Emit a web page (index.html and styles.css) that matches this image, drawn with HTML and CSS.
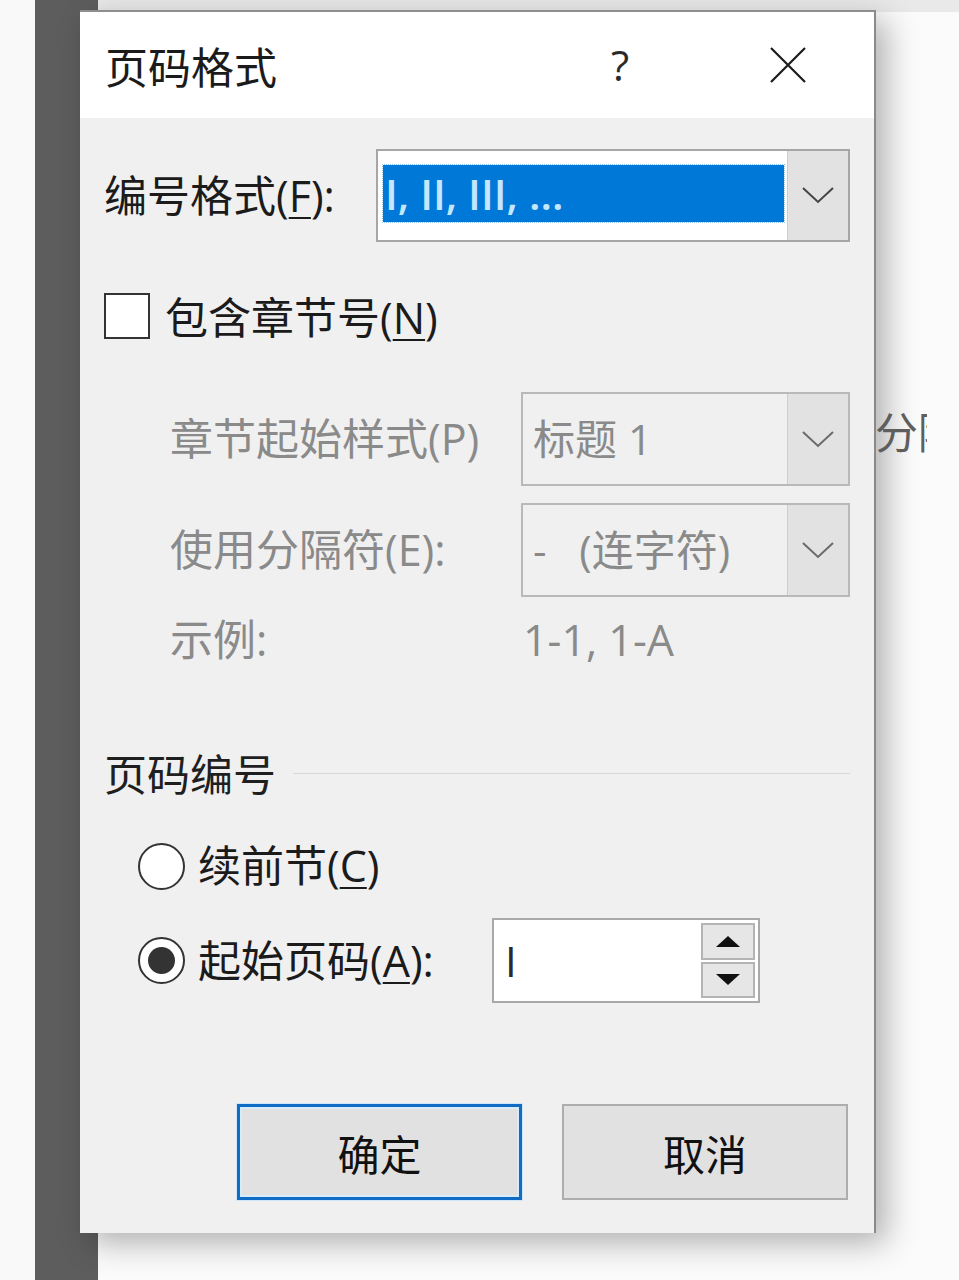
FILE: index.html
```html
<!DOCTYPE html>
<html lang="zh-CN">
<head>
<meta charset="utf-8">
<title>页码格式</title>
<link rel="stylesheet" href="styles.css">
</head>
<body>
<div class="desk">
  <div class="strip-light"></div>
  <div class="strip-dark"></div>
  <div class="doc"></div>
</div>

<section class="dialog">
  <header class="titlebar">
    <span class="title">页码格式</span>
    <span class="help">?</span>
    <span class="close">
      <svg width="38" height="38" viewBox="0 0 38 38"><path d="M2 2 L36 36 M36 2 L2 36" stroke="#1b1b1b" stroke-width="2.2" fill="none"/></svg>
    </span>
  </header>

  <div class="content">
    <div class="row row-format">
      <span class="lbl lbl-format">编号格式(<u>F</u>):</span>
      <div class="combo combo-active">
        <div class="combo-field field-white"><span class="sel">I, II, III, ...</span></div>
        <div class="combo-btn">
          <svg width="32" height="17" viewBox="0 0 32 17"><path d="M1 1 L16 15 L31 1" stroke="#444" stroke-width="2" fill="none"/></svg>
        </div>
      </div>
    </div>

    <div class="row row-check">
      <span class="checkbox"></span>
      <span class="lbl check-lbl">包含章节号(<u>N</u>)</span>
    </div>

    <div class="row row-p">
      <span class="lbl dis lbl-sub">章节起始样式(P)</span>
      <div class="combo combo-dis">
        <div class="combo-field field-dis"><span class="val">标题 1</span></div>
        <div class="combo-btn">
          <svg width="32" height="17" viewBox="0 0 32 17"><path d="M1 1 L16 15 L31 1" stroke="#6a6a6a" stroke-width="2" fill="none"/></svg>
        </div>
      </div>
      <span class="clip-text">分隔</span>
    </div>

    <div class="row row-e">
      <span class="lbl dis lbl-sub">使用分隔符(E):</span>
      <div class="combo combo-dis">
        <div class="combo-field field-dis"><span class="val">-&nbsp;&nbsp;&nbsp;(连字符)</span></div>
        <div class="combo-btn">
          <svg width="32" height="17" viewBox="0 0 32 17"><path d="M1 1 L16 15 L31 1" stroke="#6a6a6a" stroke-width="2" fill="none"/></svg>
        </div>
      </div>
    </div>

    <div class="row row-example">
      <span class="lbl dis lbl-sub">示例:</span>
      <span class="lbl dis example-val">1-1, 1-A</span>
    </div>

    <div class="row row-group">
      <span class="lbl group-title">页码编号</span>
      <span class="group-line"></span>
    </div>

    <div class="row row-radio1">
      <span class="radio"></span>
      <span class="lbl radio-lbl">续前节(<u>C</u>)</span>
    </div>

    <div class="row row-radio2">
      <span class="radio radio-on"><span class="dot"></span></span>
      <span class="lbl radio-lbl radio-lbl2">起始页码(<u>A</u>):</span>
      <div class="spin">
        <span class="spin-val">I</span>
        <div class="spin-btns">
          <span class="spin-btn"><svg width="24" height="11" viewBox="0 0 24 11"><path d="M12 0 L24 11 L0 11 Z" fill="#111"/></svg></span>
          <span class="spin-btn"><svg width="24" height="11" viewBox="0 0 24 11"><path d="M0 0 L24 0 L12 11 Z" fill="#111"/></svg></span>
        </div>
      </div>
    </div>

    <div class="row row-buttons">
      <span class="btn btn-ok">确定</span>
      <span class="btn btn-cancel">取消</span>
    </div>
  </div>
</section>
</body>
</html>
```

FILE: styles.css
```css
html, body {
  margin: 0;
  padding: 0;
}
body {
  width: 959px;
  height: 1280px;
  overflow: hidden;
  position: relative;
  background: #fbfbfb;
  font-family: "Open Sans", "Noto Sans CJK SC", sans-serif;
  color: #1b1b1b;
}

.desk {
  display: flex;
  height: 1280px;
}
.strip-light {
  width: 35px;
  background: #f9f9f9;
}
.strip-dark {
  width: 63px;
  background: #5d5d5d;
}
.doc {
  flex: 1;
  background: linear-gradient(to bottom, #e9e9e9 0, #e9e9e9 12px, #fbfbfb 12px);
}

.dialog {
  position: absolute;
  left: 80px;
  top: 10px;
  width: 796px;
  height: 1223px;
  box-sizing: border-box;
  background: #f0f0f0;
  border-top: 2px solid #8e8e8e;
  border-right: 2px solid #8a8a8a;
  box-shadow: 10px 10px 30px rgba(0, 0, 0, 0.3);
}

.titlebar {
  height: 106px;
  background: #ffffff;
  display: flex;
  align-items: center;
  padding: 0 51px 0 25px;
}
.title {
  flex: 1;
  font-size: 43px;
  line-height: 50px;
  font-family: "Noto Sans CJK SC", sans-serif;
  color: #1b1b1b;
}
.help {
  width: 60px;
  text-align: center;
  font-size: 42px;
  line-height: 50px;
  color: #2a2a2a;
  margin-right: 103px;
}
.close {
  width: 70px;
  display: flex;
  justify-content: center;
}

.content {
  padding: 0 24px 0 24px;
}

.row {
  display: flex;
  align-items: center;
}
.lbl {
  font-size: 43px;
  line-height: 50px;
  white-space: nowrap;
  flex-shrink: 0;
}
.lbl u {
  text-decoration-thickness: 2px;
  text-underline-offset: 5px;
}
.dis {
  color: #8a8a8a;
}

.row-format {
  margin-top: 31px;
  height: 93px;
}
.lbl-format {
  width: 272px;
}

.combo {
  display: flex;
  box-sizing: border-box;
  height: 100%;
  flex-shrink: 0;
}
.combo-active {
  width: 474px;
  border: 2px solid #a6a6a6;
}
.combo-dis {
  width: 329px;
  border: 2px solid #b9b9b9;
}
.combo-field {
  flex: 1;
  display: flex;
  align-items: center;
}
.field-white {
  background: #ffffff;
  padding: 14px 3px 18px 5px;
}
.sel {
  flex: 1;
  height: 57px;
  box-sizing: border-box;
  display: flex;
  align-items: center;
  background: #0078d7;
  outline: 1px dotted #8cc8f5;
  color: #c4e6ff;
  font-size: 42px;
  font-weight: 600;
  padding-left: 2px;
}
.field-dis {
  background: #f0f0f0;
  padding-left: 10px;
}
.val {
  font-size: 42px;
  line-height: 50px;
  color: #8a8a8a;
}
.combo-btn {
  width: 60px;
  background: #e2e2e2;
  border-left: 1px solid #cdcdcd;
  display: flex;
  align-items: center;
  justify-content: center;
}

.row-check {
  margin-top: 51px;
  height: 46px;
}
.checkbox {
  width: 46px;
  height: 46px;
  box-sizing: border-box;
  border: 2px solid #333333;
  background: #ffffff;
  flex-shrink: 0;
}
.check-lbl {
  margin-left: 15px;
  margin-top: 4px;
}

.row-p {
  margin-top: 53px;
  height: 94px;
}
.lbl-sub {
  padding-left: 66px;
  width: 351px;
}
.clip-text {
  flex-shrink: 0;
  width: 52px;
  overflow: hidden;
  margin-left: 25px;
  white-space: nowrap;
  font-size: 43px;
  line-height: 50px;
  color: #5e5e5e;
  margin-top: -12px;
}

.row-e {
  margin-top: 17px;
  height: 94px;
}

.row-example {
  height: 86px;
}
.example-val {
  padding-left: 2px;
}

.row-group {
  margin-top: 67px;
  height: 50px;
}
.group-title {
  color: #1f1f1f;
}
.group-line {
  flex: 1;
  height: 1px;
  background: #d8d8d8;
  margin-left: 17px;
  margin-top: -4px;
}

.row-radio1 {
  margin-top: 41px;
  height: 50px;
  padding-left: 34px;
}
.radio {
  width: 47px;
  height: 47px;
  box-sizing: border-box;
  border: 2px solid #333333;
  border-radius: 50%;
  background: #ffffff;
  flex-shrink: 0;
  display: flex;
  align-items: center;
  justify-content: center;
}
.dot {
  width: 27px;
  height: 27px;
  border-radius: 50%;
  background: #333333;
}
.radio-lbl {
  margin-left: 13px;
}
.radio-lbl2 {
  width: 294px;
}

.row-radio2 {
  margin-top: 27px;
  height: 85px;
  padding-left: 34px;
}
.spin {
  width: 268px;
  height: 85px;
  box-sizing: border-box;
  border: 2px solid #a9a9a9;
  background: #ffffff;
  display: flex;
  align-items: center;
  flex-shrink: 0;
  padding: 3px 3px 3px 11px;
}
.spin-val {
  flex: 1;
  font-family: "Open Sans", sans-serif;
  font-size: 42px;
  line-height: 50px;
  color: #2a2a2a;
}
.spin-btns {
  width: 54px;
  height: 100%;
  display: flex;
  flex-direction: column;
  gap: 2px;
}
.spin-btn {
  flex: 1;
  box-sizing: border-box;
  border: 2px solid #b4b4b4;
  background: #e6e6e6;
  display: flex;
  align-items: center;
  justify-content: center;
}

.row-buttons {
  margin-top: 101px;
  height: 96px;
  padding-left: 133px;
  gap: 40px;
}
.btn {
  height: 96px;
  box-sizing: border-box;
  display: flex;
  align-items: center;
  justify-content: center;
  background: #e1e1e1;
  font-size: 42px;
  font-family: "Noto Sans CJK SC", sans-serif;
  color: #111111;
  flex-shrink: 0;
}
.btn-ok {
  width: 285px;
  border: 3px solid #0f6bc4;
  box-shadow: inset 0 0 0 2px #d6ecfb, 0 0 0 1px #cfe6f7;
}
.btn-cancel {
  width: 286px;
  border: 2px solid #adadad;
}
```
